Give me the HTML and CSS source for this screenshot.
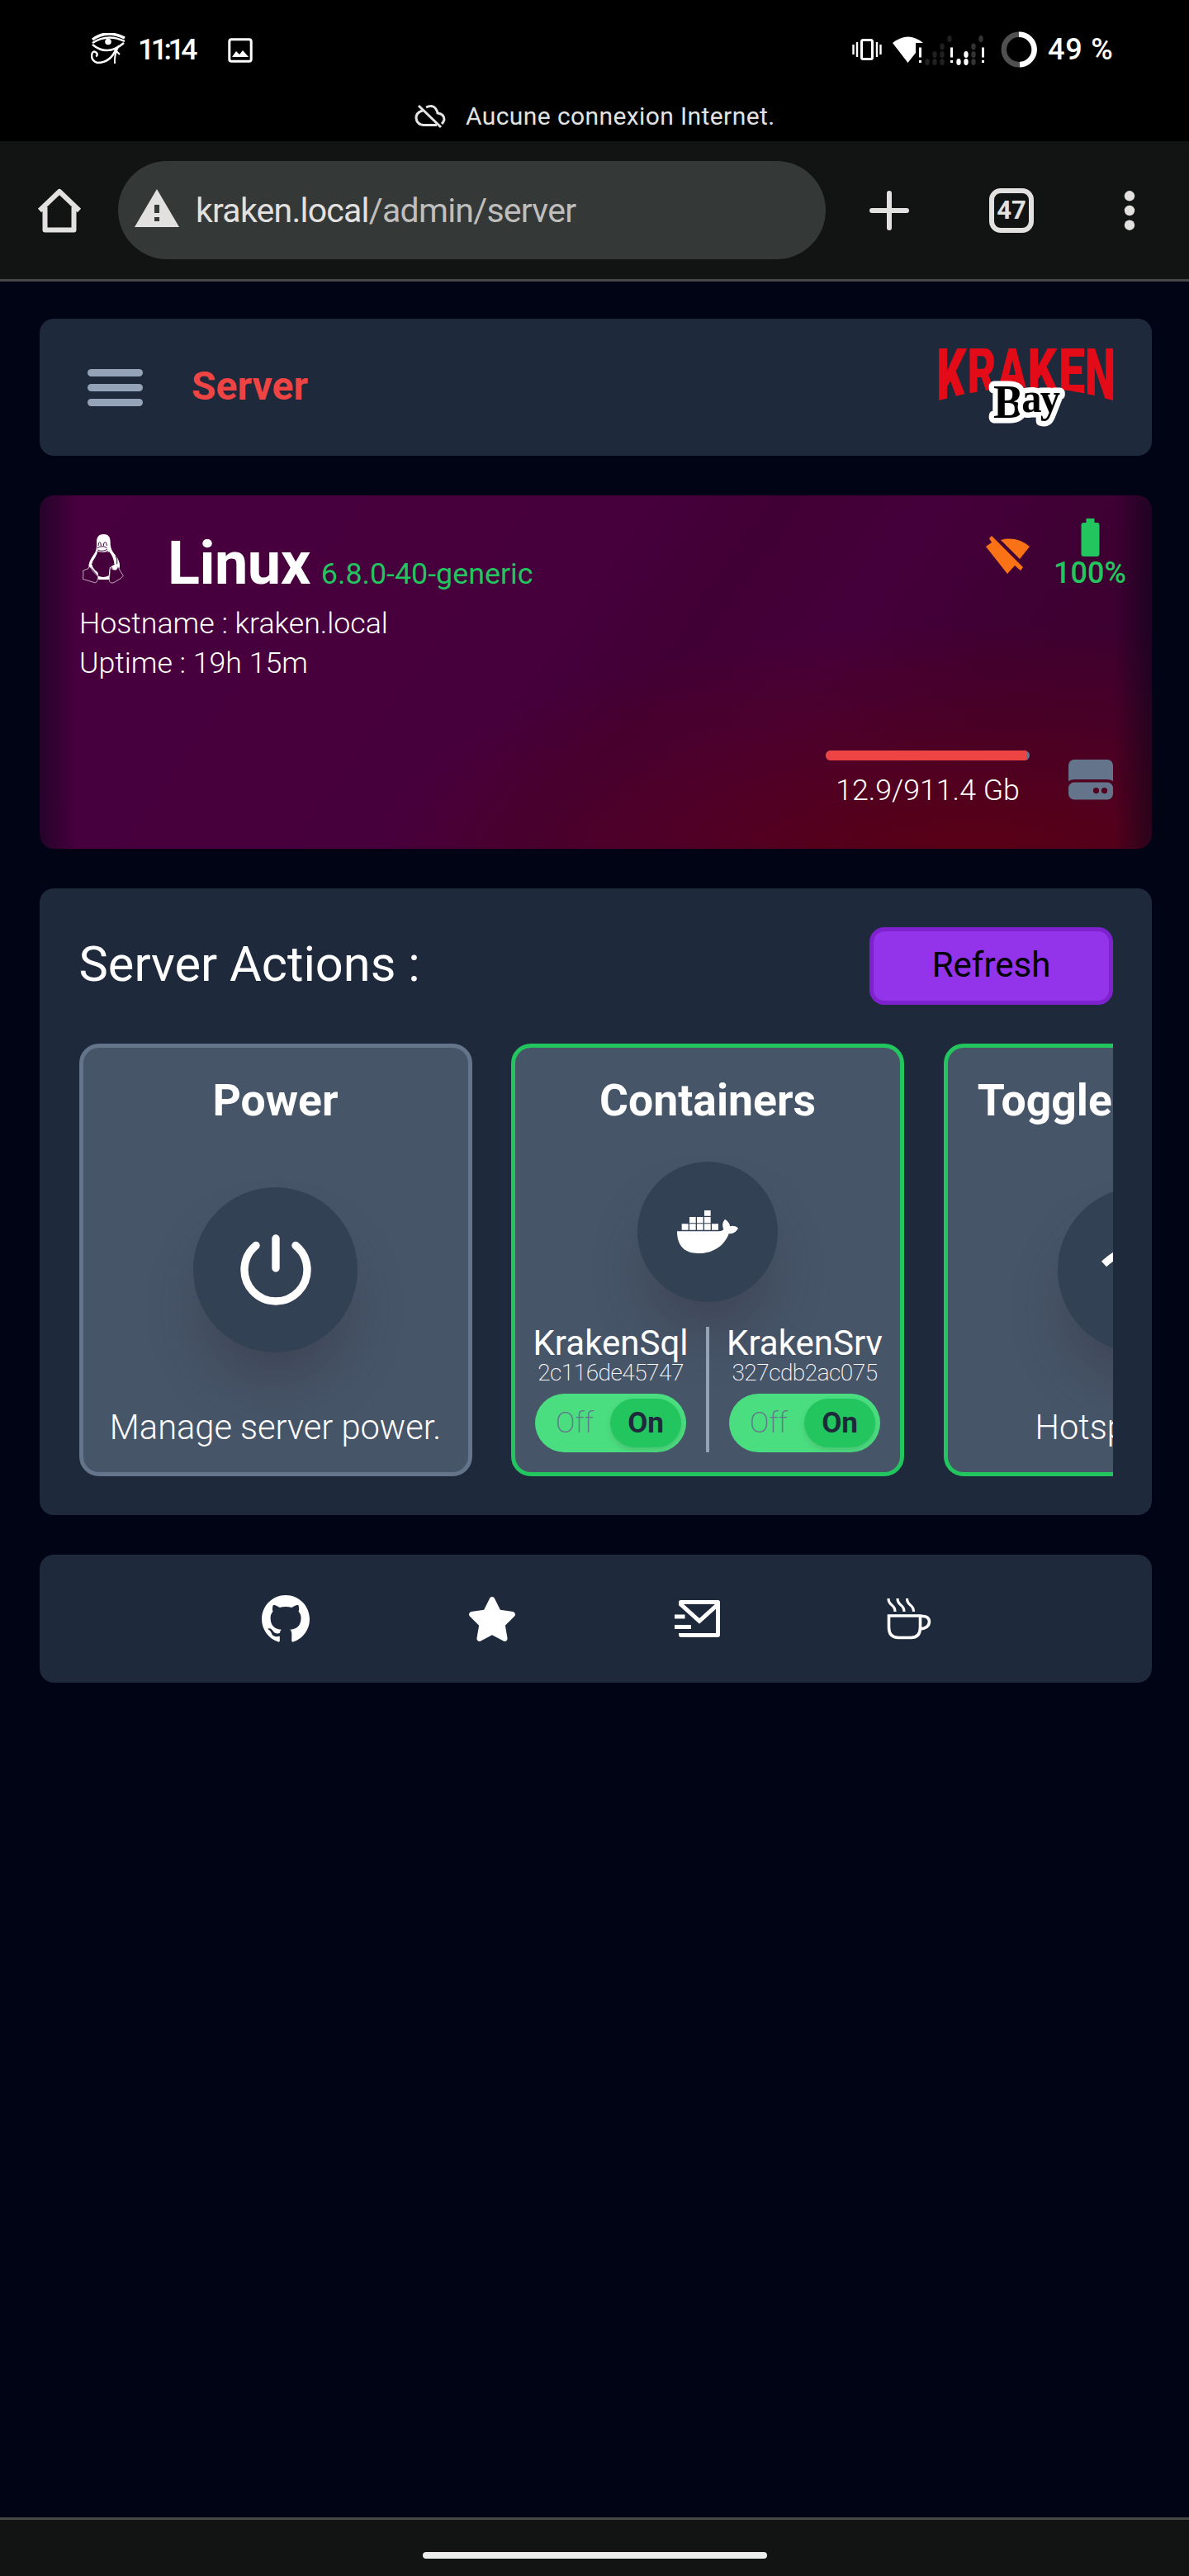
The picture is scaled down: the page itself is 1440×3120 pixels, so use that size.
FILE: index.html
```html
<!DOCTYPE html>
<html lang="fr">
<head>
<meta charset="utf-8">
<title>Server</title>
<link rel="stylesheet" href="styles.css">
</head>
<body>
<div class="status">
  <svg class="eye" width="42" height="38" viewBox="0 0 42 38" fill="none" stroke="#fff">
    <path d="M2 8Q19-5 41 6" stroke-width="3.4"/>
    <path d="M2 12Q20 0 41 10M2 14Q20 29 40 12" stroke-width="2.4"/>
    <circle cx="21" cy="10.500" r="3.800" fill="#fff" stroke="none"/>
    <path d="M31 18C27 29 19 36 8 36Q1 34 1 27Q2 20 7 24Q9 27 6 28" stroke-width="2.400"/>
    <path d="M34 15Q28 26 29 37M31 22l4 4" stroke-width="2"/>
  </svg>
  <span class="clock">11:14</span>
  <svg class="picture" width="30" height="30" viewBox="0 0 30 30"><rect x="1.800" y="1.800" width="26.400" height="26.400" rx="2.500" fill="none" stroke="#fff" stroke-width="3"/><path d="M5 23l5-7 4 4 4-5 7 8z" fill="#fff"/></svg>
  <svg class="signals" width="162" height="44" viewBox="0 0 162 44" fill="#fff">
    <g fill="none" stroke="#fff" stroke-width="2.400"><rect x="11.500" y="10.500" width="13" height="23" rx="2" stroke-width="3"/><path d="M1.500 16v12M6 13v18M30 13v18M34.500 16v12"/></g>
    <path d="M49 14Q68-1 86 14H77v12L67.500 38z"/>
    <path d="M81 19.500h3v12h-3zM81 35h3v3h-3zM119 19.500h3v12h-3zM119 35h3v3h-3zM157 19.500h3v12h-3zM157 35h3v3h-3z"/>
    <g fill="#202020"><ellipse cx="91" cy="37" rx="2.700" ry="4"/><ellipse cx="100" cy="37" rx="2.700" ry="4"/><ellipse cx="109" cy="37" rx="2.700" ry="4"/><ellipse cx="100" cy="28" rx="2.700" ry="4"/><ellipse cx="109" cy="28" rx="2.700" ry="4"/><ellipse cx="109" cy="18.500" rx="2.700" ry="4"/><ellipse cx="118" cy="9" rx="2.700" ry="4"/></g>
    <g fill="#333"><ellipse cx="147" cy="37" rx="2.700" ry="4"/><ellipse cx="147" cy="28" rx="2.700" ry="4"/><ellipse cx="147" cy="18.500" rx="2.700" ry="4"/><ellipse cx="156" cy="9" rx="2.700" ry="4"/></g>
    <ellipse cx="129" cy="37" rx="2.700" ry="4"/><ellipse cx="138" cy="37" rx="2.700" ry="4"/><ellipse cx="138" cy="28" rx="2.700" ry="4"/>
  </svg>
  <svg class="ring" width="44" height="44" viewBox="0 0 44 44" fill="none" stroke-width="6.500"><circle cx="22" cy="22" r="18.200" stroke="#505050"/><path d="M22 3.800a18.200 18.200 0 0 1 1 36.400" stroke="#fff"/></svg>
  <span class="charge">49 %</span>
</div>
<div class="offline">
  <svg width="38" height="29" viewBox="0 0 38 29" fill="none" stroke="#e3e3e3" stroke-width="3"><path d="M5 2l27 26"/><path d="M10 8Q2 10 2 17Q3 25 11 25.500H27M14 4Q25-1 28 11Q36 12 36 19Q35 22 33 24"/></svg>
  <span>Aucune connexion Internet.</span>
</div>
<div class="toolbar">
  <svg class="home" width="54" height="54" viewBox="0 0 54 54" fill="none" stroke="#e3e1e0" stroke-width="6" stroke-linejoin="round"><path d="M3 27L27 4L51 27M9.500 23V50.500H44.500V23"/></svg>
  <div class="address">
    <svg width="54" height="46" viewBox="0 0 54 46"><path d="M27 0L54 46H0z" fill="#e3e1e0"/><path d="M24 19h6v10h-6zM24 34h6v5h-6z" fill="#343837"/></svg>
    <span class="url">kraken.local<span>/admin/server</span></span>
  </div>
  <svg class="plus" width="48" height="48" viewBox="0 0 48 48" stroke="#e3e1e0" stroke-width="6" stroke-linecap="round"><path d="M24 3v42M3 24h42"/></svg>
  <div class="tabs">47</div>
  <svg class="more" width="14" height="48" viewBox="0 0 14 48" fill="#e3e1e0"><circle cx="7" cy="6.300" r="6.200"/><circle cx="7" cy="24" r="6.200"/><circle cx="7" cy="41.700" r="6.200"/></svg>
</div>
<main class="page">
  <header class="card topbar">
    <div class="burger"><i></i><i></i><i></i></div>
    <h1>Server</h1>
    <svg class="logo" width="232" height="116" viewBox="0 0 232 116">
      <defs><clipPath id="arch"><path d="M0 11H232V76L222 74Q116 43 11 74L0 76z"/></clipPath></defs>
      <g class="brand" clip-path="url(#arch)">
        <text x="8" y="74" font-size="88.600" textLength="37" lengthAdjust="spacingAndGlyphs">K</text>
        <text x="45.500" y="66" font-size="77.400" textLength="35" lengthAdjust="spacingAndGlyphs">R</text>
        <text x="82.500" y="62" font-size="71.700" textLength="35" lengthAdjust="spacingAndGlyphs">A</text>
        <text x="118.500" y="62" font-size="71.700" textLength="36" lengthAdjust="spacingAndGlyphs">K</text>
        <text x="156" y="65" font-size="76" textLength="32" lengthAdjust="spacingAndGlyphs">E</text>
        <text x="188" y="74" font-size="88.600" textLength="37" lengthAdjust="spacingAndGlyphs">N</text>
      </g>
      <text class="bay" x="77" y="94.500" font-size="57" textLength="79" lengthAdjust="spacingAndGlyphs">B<tspan dy="-6.500" font-size="51">ay</tspan></text>
    </svg>
  </header>

  <section class="hero">
    <div class="hero-row">
      <div>
        <div class="os">
          <svg class="tux" width="80" height="80" viewBox="0 0 240 240">
            <path fill="#fff" d="M106 33C88 33 81 45 81 62C82 82 80 94 70 108C58 124 52 138 52 151L62 155L85 184L88 198H126L132 156L148 147L164 156C169 136 156 116 145 104C133 88 131 78 131 61C131 43 123 33 106 33z"/>
            <path fill="#45003b" d="M85 96C80 114 69 124 65 148Q67 155 76 164Q90 172 86 184Q104 194 125 184Q127 170 128 158Q134 147 146 144Q143 116 127 97Q118 101 102 98Q92 99 85 96z"/>
            <path fill="#45003b" stroke="#fff" stroke-width="2" d="M54 151Q61 154 68 168L86 187Q87 204 77 210L31 196Q34 179 32 165L51 158zM130 153Q136 163 151 163L160 152Q163 163 178 184Q173 193 153 203Q135 217 127 204z"/>
            <path fill="none" stroke="#45003b" stroke-width="3" d="M87 75q0-13 5-13t5 13M106 75q0-13 6-13t6 13M83 84Q102 70 119 84M85 90Q103 99 119 88M82 96Q103 107 123 94M64 144Q67 128 77 119M150 111Q158 124 155 142"/>
            <circle cx="147" cy="154" r="9" fill="#fff"/>
          </svg>
          <strong>Linux</strong><span class="kernel">6.8.0-40-generic</span>
        </div>
        <p>Hostname : kraken.local</p>
        <p class="uptime">Uptime : 19h 15m</p>
      </div>
      <div class="health">
        <svg width="53" height="46" viewBox="0 0 53 46" fill="#f97316"><path d="M4 3L7 0L45 38L42 42L35 36L26 46L0 13L7 8z"/><path d="M18 5Q37 0 53 13L41 28z"/></svg>
        <div class="battery">
          <svg width="23" height="46" viewBox="0 0 23 46" fill="#22c55e"><path d="M6.500 0h10v5h3a3 3 0 0 1 3 3v35a3 3 0 0 1-3 3h-16a3 3 0 0 1-3-3V8a3 3 0 0 1 3-3h3z"/></svg>
          <span>100%</span>
        </div>
      </div>
    </div>
    <div class="storage">
      <div class="usage"><div class="track"><i style="width:98.5%"></i></div><span>12.9/911.4 Gb</span></div>
      <svg width="54" height="49" viewBox="0 0 54 49" fill="#64748b"><path d="M0 26V7a7 7 0 0 1 7-7h40a7 7 0 0 1 7 7v19Q51 24 46 24H8Q3 24 0 26z"/><path fill-rule="evenodd" d="M7 27.500h40a7 7 0 0 1 7 7v7a7 7 0 0 1-7 7H7a7 7 0 0 1-7-7v-7a7 7 0 0 1 7-7zM33.500 34a3.600 3.600 0 1 0 .01 7.200a3.600 3.600 0 0 0 0-7.200zM43.500 34a3.600 3.600 0 1 0 .01 7.200a3.600 3.600 0 0 0 0-7.200z"/></svg>
    </div>
  </section>

  <section class="card actions">
    <div class="actions-head"><h2>Server Actions :</h2><button>Refresh</button></div>
    <div class="tiles">
      <article class="tile">
        <h3>Power</h3>
        <div class="disc"><svg width="86" height="86" viewBox="0 0 86 86" fill="none" stroke="#fff" stroke-width="9.400" stroke-linecap="round"><path d="M43 5v36M19 13.500A38 38 0 1 0 67 13.500"/></svg></div>
        <p>Manage server power.</p>
      </article>
      <article class="tile on">
        <h3>Containers</h3>
        <div class="disc small"><svg width="74" height="52" viewBox="660 622 222 144" preserveAspectRatio="none" fill="#fff"><path d="M759 622h23v19h-23zM705 644h23v20h-23zM732 644h23v20h-23zM759 644h23v20h-23zM677 667h24v21h-24zM705 667h23v21h-23zM732 667h23v21h-23zM759 667h23v21h-23zM786 667h24v21h-24z"/><path d="M660 692H812Q824 692 829 686Q820 667 834 652Q850 661 852 675Q869 672 882 681Q873 702 848 700C832 740 792 766 738 766C684 766 660 738 660 692z"/></svg></div>
        <div class="services">
          <div class="service"><b>KrakenSql</b><small>2c116de45747</small><div class="switch"><span>Off</span><em>On</em></div></div>
          <hr>
          <div class="service"><b>KrakenSrv</b><small>327cdb2ac075</small><div class="switch"><span>Off</span><em>On</em></div></div>
        </div>
      </article>
      <article class="tile on">
        <h3 class="wide">Toggle Hotspot</h3>
        <div class="disc"><svg width="94" height="70" viewBox="0 0 94 70" fill="none" stroke="#fff" stroke-width="9"><path d="M3 28Q47-12 91 28M17 43Q47 16 77 43"/><circle cx="47" cy="60" r="5" fill="#fff"/></svg></div>
        <p>Hotspot is on.</p>
      </article>
    </div>
  </section>

  <footer class="card links">
    <svg width="58" height="57" viewBox="0 0 16 15.700" fill="#fff" preserveAspectRatio="none"><path d="M8 0C3.580 0 0 3.580 0 8c0 3.540 2.290 6.530 5.470 7.590.4.070.55-.17.55-.38 0-.19-.01-.82-.01-1.490-2.010.37-2.530-.49-2.690-.94-.09-.23-.48-.94-.82-1.130-.28-.15-.68-.52-.01-.53.63-.01 1.080.58 1.230.82.72 1.210 1.870.87 2.330.66.070-.52.280-.87.510-1.070-1.780-.2-3.640-.89-3.640-3.950 0-.87.310-1.590.820-2.150-.08-.2-.36-1.020.080-2.120 0 0 .67-.21 2.200.82.64-.18 1.320-.27 2-.27.68 0 1.360.09 2 .27 1.530-1.040 2.200-.82 2.200-.82.44 1.100.16 1.920.08 2.120.51.56.82 1.270.82 2.150 0 3.070-1.870 3.750-3.650 3.950.29.25.54.73.54 1.480 0 1.070-.01 1.930-.01 2.200 0 .21.15.46.55.38A8.013 8.013 0 0 0 16 8c0-4.420-3.580-8-8-8z"/></svg>
    <svg class="star" width="56" height="54" viewBox="20 0 536 512" fill="#fff" preserveAspectRatio="none"><path d="M259.300 17.800L194 150.200 47.900 171.500c-26.200 3.800-36.700 36.100-17.700 54.600l105.700 103-25 145.500c-4.500 26.300 23.200 46 46.400 33.700L288 439.600l130.700 68.700c23.200 12.200 50.900-7.400 46.400-33.700l-25-145.500 105.700-103c19-18.500 8.500-50.800-17.700-54.600L382 150.200 316.700 17.800c-11.700-23.600-45.600-23.900-57.400 0z"/></svg>
    <svg class="mail" width="55" height="45" viewBox="0 3 22 18" fill="#fff"><path d="M22 20.007a1 1 0 0 1-.992.993H2.992A.993.993 0 0 1 2 20.007V19h18V7.300l-8 7.200-10-9V4a1 1 0 0 1 1-1h18a1 1 0 0 1 1 1zM4.434 5L12 11.810 19.566 5zM0 15h8v2H0zM0 10h5v2H0z"/></svg>
    <svg class="coffee" width="54" height="50" viewBox="0 0 54 50" fill="none" stroke="#fff" stroke-width="3.600"><path d="M2.500 21H40.500V35Q40.500 47.500 29 47.500H14Q2.500 47.500 2.500 35zM40.500 21.500H44Q51.500 22 51.500 28.500Q51 36 40.500 37"/><path d="M2 0Q2 5 6 8Q10 11 10 16M13 0Q13 5 17 8Q21 11 21 16M24.500 0Q24.500 5 28.500 8Q32.500 11 32.500 16" stroke-width="3.200"/></svg>
  </footer>
</main>
<div class="gesture"><i></i></div>
</body>
</html>
```
FILE: styles.css
```css
* { box-sizing: border-box; }
body { margin: 0; width: 1440px; height: 3120px; display: flex; flex-direction: column; background: #010414; color: #fff; font-family: Roboto, "Liberation Sans", sans-serif; overflow: hidden; }
svg { display: block; flex: none; }
h1, h2, h3, p { margin: 0; font-weight: 400; }
i { display: block; }

.status { height: 119px; display: flex; align-items: center; padding-left: 110px; background: #000; font-size: 36px; font-weight: 500; white-space: nowrap; }
.clock { width: 74px; margin-left: 15px; font-size: 35.5px; letter-spacing: -4.4px; }
.picture { margin: 2px 0 0 35px; }
.eye { margin-bottom: 1px; }
.signals { margin: 1px 0 0 726px; }
.ring { margin-left: 18px; }
.charge { margin-left: 13px; letter-spacing: .8px; }

.offline { height: 52px; padding: 0 0 9px 502px; display: flex; align-items: center; gap: 24px; background: #000; color: #e3e3e3; font-size: 30px; line-height: 43px; letter-spacing: .4px; }

.toolbar { height: 170px; display: flex; align-items: center; padding-left: 45px; background: #121413; border-bottom: 3px solid #474747; }
.address { width: 857px; height: 119px; margin-left: 44px; padding-left: 20px; border-radius: 60px; background: #343837; display: flex; align-items: center; }
.address svg { margin-bottom: 6px; }
.url { margin-left: 20px; font-size: 41px; letter-spacing: -.75px; color: #e3e1e0; }
.url span { color: #c0bebd; }
.plus { margin-left: 53px; }
.tabs { width: 54px; height: 54px; margin-left: 97px; border: 6px solid #e3e1e0; border-radius: 14px; display: grid; place-items: center; font-size: 31px; font-weight: 700; color: #e3e1e0; line-height: 42px; }
.more { margin-left: 109px; }

.page { flex: 1; display: flex; flex-direction: column; gap: 48px; padding: 45px 45px 0 48px; }
.card { background: #1e293b; border-radius: 17px; }

.topbar { height: 166px; display: flex; align-items: center; padding: 0 37px 0 58px; }
.burger { width: 67px; display: grid; gap: 9px; }
.burger i { height: 9px; border-radius: 4.500px; background: #94a3b8; }
h1 { margin: -3px 0 0 59px; font-size: 48px; font-weight: 700; color: #ef4444; }
.logo { margin: 0 0 0 auto; }
.brand { fill: #e30b17; font-weight: 900; }
.bay { font-family: "Liberation Serif", serif; font-weight: 700; stroke: #fff; stroke-width: 13px; stroke-linejoin: round; paint-order: stroke; letter-spacing: -2px; }

.hero { height: 428px; border-radius: 17px; padding: 30px 31px 59px 48px; display: flex; flex-direction: column; justify-content: space-between;
  background:
    linear-gradient(90deg, rgba(2, 6, 23, .5), transparent 45px, transparent calc(100% - 45px), rgba(2, 6, 23, .5)),
    radial-gradient(ellipse 740px 300px at 84% 106%, #5c0014, rgba(92, 0, 20, 0)),
    linear-gradient(125deg, #48003e 0, #46003c 44%, #410035 55%, #44003a 66%, #3d0031 82%, #3c0030 100%); }
.hero-row { display: flex; justify-content: space-between; }
.os { height: 72px; margin: 17px 0 12px; display: flex; align-items: baseline; line-height: 72px; }
.tux { align-self: flex-start; margin: -11px 33px 0 -6px; }
.os strong { font-size: 72px; font-weight: 700; letter-spacing: -.5px; }
.kernel { margin-left: 13px; font-size: 35.800px; color: #22c55e; }
.hero p { font-size: 35.700px; font-weight: 300; line-height: 48px; }
.health { display: flex; align-items: flex-start; gap: 29px; margin-top: -2px; }
.health > svg { margin-top: 21px; }
.battery { display: flex; flex-direction: column; align-items: center; font-size: 36px; font-weight: 500; color: #22c55e; line-height: 41px; }
.storage { display: flex; justify-content: flex-end; gap: 47px; padding-right: 16px; align-items: flex-end; height: 60px; }
.usage { width: 247px; text-align: center; font-size: 35.700px; font-weight: 300; line-height: 44px; align-self: flex-start; display: grid; gap: 14px; }
.track { height: 12px; border-radius: 6px; background: #64748b; overflow: hidden; }
.track i { height: 100%; background: #ef4444; }

.actions { height: 759px; padding: 47px 47px 0 47.500px; }
.actions-head { display: flex; justify-content: space-between; align-items: center; height: 94px; margin-bottom: 47px; }
h2 { font-size: 59.500px; margin-top: -4px; }
button { width: 295px; height: 94px; padding: 0 0 4px; border: 5px solid #7e22ce; border-radius: 18px; background: #9333ea; color: #000; font: 400 42px Roboto, sans-serif; }
.tiles { display: flex; gap: 47.500px; overflow: hidden; }
.tile { flex: none; width: 476px; height: 524px; padding-top: 37px; border: 5px solid #64748b; border-radius: 24px; background: #475569; display: flex; flex-direction: column; align-items: center; white-space: nowrap; }
.tile.on { border-color: #22c55e; }
h3 { font-size: 53.500px; line-height: 54px; font-weight: 700; }
.wide { padding-right: 25px; }
.disc { width: 199px; height: 200px; margin: 78px 0 65px; border-radius: 50%; background: #334155; display: grid; place-items: center; box-shadow: 0 46px 64px -12px rgba(52, 52, 62, .45); }
.disc.small { width: 170px; height: 170px; margin: 47px 0 30px; }
.tile p { font-size: 41.600px; line-height: 51px; font-weight: 300; }
.services { display: flex; gap: 24px; }
.services hr { width: 4px; height: 152px; margin: 0; border: 0; background: #94a3b8; }
.service { width: 183px; display: flex; flex-direction: column; align-items: center; }
.service b { font-size: 42px; line-height: 39px; font-weight: 400; }
.service small { font-size: 28px; line-height: 33px; font-weight: 200; letter-spacing: -.5px; }
.switch { width: 183px; height: 71px; margin-top: 9px; padding: 6px; border-radius: 36px; background: #4ade80; display: flex; align-items: center; font-size: 35px; }
.switch span { flex: 1; text-align: center; font-weight: 200; color: #64748b; padding-right: 1px; }
.switch em { width: 86px; height: 59px; border-radius: 30px; background: #22c55e; color: #1e293b; font-style: normal; font-weight: 700; line-height: 59px; text-align: center; box-shadow: 0 4px 6px rgba(80, 140, 90, .3); }

.links { height: 155px; display: flex; align-items: center; padding-left: 269px; }
.star { margin-left: 193px; }
.mail { margin-left: 193px; }
.coffee { margin-left: 202px; }

.gesture { height: 71px; padding-top: 39px; background: #121413; border-top: 3px solid #474747; display: flex; justify-content: center; align-items: flex-start; }
.gesture i { width: 417px; height: 8px; border-radius: 4px; background: #ececec; }
```
